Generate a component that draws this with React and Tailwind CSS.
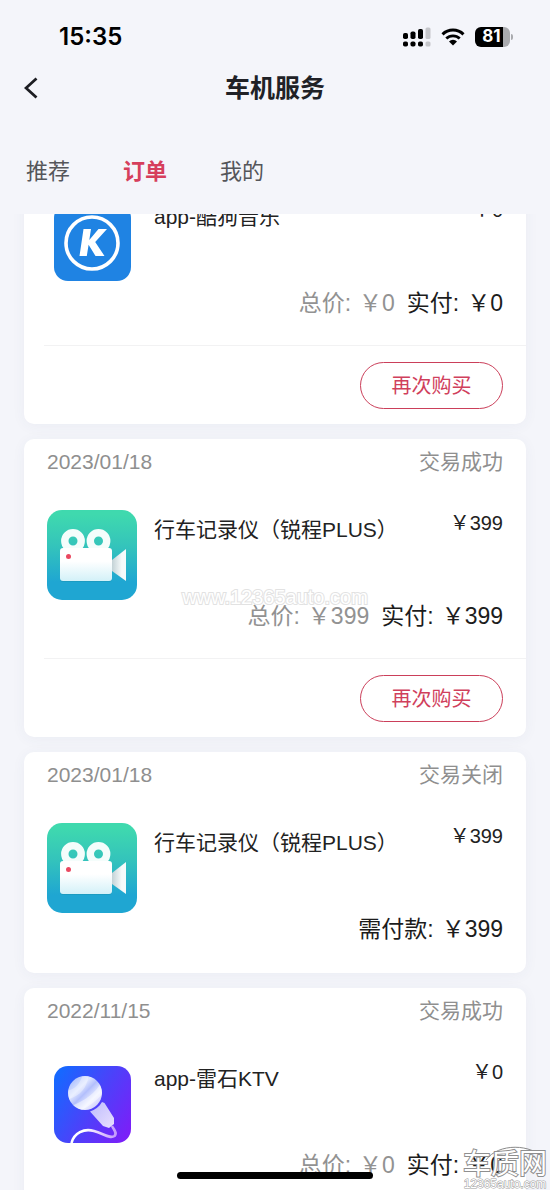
const tabs = ['推荐', '订单', '我的'];

const orders = [
  { id: 1, date: '2023/02/06', status: '交易成功', icon: 'kugou', name: 'app-酷狗音乐', price: 0, paid: true },
  { id: 2, date: '2023/01/18', status: '交易成功', icon: 'camera', name: '行车记录仪（锐程PLUS）', price: 399, paid: true },
  { id: 3, date: '2023/01/18', status: '交易关闭', icon: 'camera', name: '行车记录仪（锐程PLUS）', price: 399, paid: false },
  { id: 4, date: '2022/11/15', status: '交易成功', icon: 'ktv', name: 'app-雷石KTV', price: 0, paid: true },
];

function KugouIcon() {
  return (
    <svg viewBox="0 0 77 77" className="size-[77px]" aria-hidden="true">
      <rect width="77" height="77" rx="14" fill="#1f83e3" />
      <circle cx="38" cy="39" r="26" fill="none" stroke="#fff" strokeWidth="3.6" />
      <path d="M29.5 25H37L35.3 36 44.5 25H53L41.2 38 50.5 52H41.5L34.6 40.8 32.8 52H25.5Z" fill="#fff" />
    </svg>
  );
}

function CameraIcon() {
  return (
    <svg viewBox="0 0 90 90" className="size-[90px]" aria-hidden="true">
      <defs>
        <linearGradient id="camBg" x1="0" y1="0" x2="0" y2="1">
          <stop offset="0.05" stopColor="#3fd9ae" />
          <stop offset="0.4" stopColor="#34c4bb" />
          <stop offset="0.8" stopColor="#1fa6d2" />
        </linearGradient>
        <linearGradient id="camBody" x1="0" y1="0" x2="0" y2="1">
          <stop offset="0.4" stopColor="#fff" />
          <stop offset="1" stopColor="#d3f1f8" />
        </linearGradient>
        <linearGradient id="camLens" x1="0" y1="0" x2="1" y2="0">
          <stop offset="0" stopColor="#c3d2d6" />
          <stop offset="0.7" stopColor="#f6fafa" />
        </linearGradient>
      </defs>
      <rect width="90" height="90" rx="15" fill="url(#camBg)" />
      <g fill="none" stroke="#f4fdfb" strokeWidth="7.4">
        <circle cx="26" cy="31" r="8.2" />
        <circle cx="51.5" cy="31" r="8.2" />
      </g>
      <path d="M65 50 79 39V71L65 61Z" fill="url(#camLens)" />
      <rect x="13" y="39" width="52" height="33" rx="3" fill="#168bab" opacity="0.4" />
      <rect x="13" y="38" width="52" height="33" rx="3" fill="url(#camBody)" />
      <circle cx="21.5" cy="46.5" r="2.5" fill="#ea4860" />
    </svg>
  );
}

function KtvIcon() {
  return (
    <svg viewBox="0 0 77 77" className="size-[77px]" aria-hidden="true">
      <defs>
        <linearGradient id="ktvBg" x1="0" y1="0.2" x2="1" y2="0.8">
          <stop offset="0" stopColor="#1668ff" />
          <stop offset="0.5" stopColor="#4a43fa" />
          <stop offset="1" stopColor="#7a20f8" />
        </linearGradient>
        <linearGradient id="ktvHead" x1="0" y1="0" x2="1" y2="1">
          <stop offset="0.1" stopColor="#a9bdfc" />
          <stop offset="0.35" stopColor="#dfe7ff" />
          <stop offset="0.5" stopColor="#b3bffc" />
          <stop offset="0.7" stopColor="#eef1ff" />
          <stop offset="1" stopColor="#b9b4fb" />
        </linearGradient>
        <linearGradient id="ktvHandle" x1="0" y1="0" x2="1" y2="1">
          <stop offset="0" stopColor="#bdbcfd" />
          <stop offset="1" stopColor="#e9dffe" />
        </linearGradient>
        <linearGradient id="ktvCord" x1="0" y1="0" x2="1" y2="0">
          <stop offset="0.3" stopColor="#fff" />
          <stop offset="1" stopColor="#c49cfc" />
        </linearGradient>
        <clipPath id="ktvHeadClip">
          <circle cx="31" cy="27" r="17" />
        </clipPath>
      </defs>
      <rect width="77" height="77" rx="14" fill="url(#ktvBg)" />
      <circle cx="31" cy="27" r="17" fill="url(#ktvHead)" />
      <g clipPath="url(#ktvHeadClip)">
        <path d="M12 34C27 30 33 22 35 8L29 8C26 18 22 23 12 25Z" fill="#fff" opacity="0.35" />
        <path d="M17 40C31 35 42 26 47 17L50 26C44 34 34 41 24 46Z" fill="#fff" opacity="0.45" />
      </g>
      <path d="M36 45.5C41 44 45 41 48 36L50.5 37 60 52V58L55 62 49 60Z" fill="url(#ktvHandle)" />
      <path
        d="M17.5 77C20 67 30 62 40 65 50 68 56 73 60.5 70 63.5 67 60 64 58 60"
        fill="none"
        stroke="url(#ktvCord)"
        strokeWidth="2.6"
      />
    </svg>
  );
}

const icons = { kugou: KugouIcon, camera: CameraIcon, ktv: KtvIcon };

function StatusBar() {
  return (
    <div className="flex h-[74px] shrink-0 items-center justify-between pr-[37px] pl-[59px]">
      <span className="font-['Inter',sans-serif] text-2xl font-semibold text-black">15:35</span>
      <div className="flex items-center gap-2.5">
        <svg viewBox="0 0 28 20" className="h-5 w-7" aria-label="信号">
          <rect x="0" y="6" width="5" height="6" rx="1.8" />
          <rect x="7.5" y="4.5" width="5" height="7.5" rx="1.8" />
          <rect x="15" y="2" width="5" height="10" rx="1.8" />
          <rect x="22.5" y="0.5" width="5" height="11.5" rx="1.5" fill="#c5c6ca" />
          <rect x="0" y="14.5" width="5" height="5" rx="1.8" />
          <rect x="7.5" y="14.5" width="5" height="5" rx="1.8" />
          <rect x="15" y="14.5" width="5" height="5" rx="1.8" />
          <rect x="22.5" y="14.5" width="5" height="5" rx="1.5" fill="#c5c6ca" />
        </svg>
        <svg viewBox="0 0 24 18" className="h-[18px] w-6" aria-label="无线网络">
          <path d="M1.5 6.3A15.2 15.2 0 0 1 22.5 6.3" fill="none" stroke="#000" strokeWidth="3" />
          <path d="M5.3 10.6A9.6 9.6 0 0 1 18.7 10.6" fill="none" stroke="#000" strokeWidth="2.8" />
          <path d="M12 17.5 8 13.5A5.7 5.7 0 0 1 16 13.5Z" />
        </svg>
        <div className="flex items-center gap-px">
          <div className="flex h-5 w-[35px] items-center justify-center rounded-md bg-[linear-gradient(90deg,#000_81%,#a9aaae_81%)] pr-0.5 font-['Inter',sans-serif] text-[17px] font-bold text-white">
            81
          </div>
          <div className="h-1.5 w-0.5 rounded-r-full bg-[#a9aaae]" />
        </div>
      </div>
    </div>
  );
}

function Amount({ label, value, className }) {
  return (
    <span className={className}>
      {label}:<span className="ml-2">￥{value}</span>
    </span>
  );
}

function OrderCard({ order }) {
  const Icon = icons[order.icon];

  return (
    <li className="rounded-[10px] bg-white shadow-[0_2px_14px_rgba(60,70,120,0.05)]">
      <div className="flex h-[46px] items-center justify-between px-[23px] text-[21px] text-[#8f8f8f]">
        <time>{order.date}</time>
        <span>{order.status}</span>
      </div>
      <div className="flex items-start px-[23px] pt-[25px] text-[#222]">
        <div className="flex size-[90px] shrink-0 items-center justify-center">
          <Icon />
        </div>
        <h2 className="mt-1 ml-[17px] flex-1 text-[21px] leading-8">{order.name}</h2>
        <span className="text-xl leading-[26px]">￥{order.price}</span>
      </div>
      <div className="flex h-8 items-center justify-end gap-3 px-[23px] text-[23px] text-[#1c1c1c]">
        {order.paid ? (
          <>
            <Amount label="总价" value={order.price} className="text-[#929292]" />
            <Amount label="实付" value={order.price} />
          </>
        ) : (
          <Amount label="需付款" value={order.price} />
        )}
      </div>
      {order.paid ? (
        <div className="mt-[26px] ml-5 flex justify-end border-t border-[#f2f2f3] pt-4 pr-[23px] pb-[15px]">
          <button
            type="button"
            className="h-[47px] w-[143px] rounded-full border border-[#cb3f5a] text-xl text-[#d0405c]"
          >
            再次购买
          </button>
        </div>
      ) : (
        <div className="h-7" />
      )}
    </li>
  );
}

function Watermarks() {
  return (
    <div className="pointer-events-none">
      <span className="absolute top-[583px] left-1/2 -translate-x-1/2 text-xl text-white [-webkit-text-stroke:2px_#e2e2e2] [paint-order:stroke]">
        www.12365auto.com
      </span>
      <div className="absolute right-0.5 bottom-0 flex flex-col items-center">
        <svg viewBox="0 0 86 16" className="-mb-2.5 h-4 w-[86px]" aria-hidden="true">
          <path d="M24 14C36 -3 70 -3 83 14" fill="none" stroke="#8a8a8a" strokeWidth="1" />
        </svg>
        <span className="text-[28px] leading-[26px] text-white [-webkit-text-stroke:2px_#8f8f8f] [paint-order:stroke]">
          车质网
        </span>
        <span className="text-xs leading-3 text-white [-webkit-text-stroke:1px_#9b9b9b] [paint-order:stroke]">
          12365auto.com
        </span>
      </div>
    </div>
  );
}

export default function App() {
  return (
    <div className="relative flex h-screen flex-col overflow-hidden bg-[#f4f5fa] font-['Liberation_Sans','Noto_Sans_CJK_SC',sans-serif]">
      <StatusBar />
      <header className="grid h-7 shrink-0 grid-cols-[1fr_auto_1fr] items-center px-6">
        <button type="button" aria-label="返回" className="justify-self-start">
          <svg viewBox="0 0 14 22" className="h-[22px] w-3.5" aria-hidden="true">
            <path d="M12.5 1.5 2 11 12.5 20.5" fill="none" stroke="#1c1d22" strokeWidth="2.8" />
          </svg>
        </button>
        <h1 className="text-[25px] leading-7 font-bold text-[#202126]">车机服务</h1>
      </header>
      <nav className="mt-10 mb-3.5 flex h-[58px] shrink-0 items-center gap-[53px] pl-[26px] text-[22px]">
        {tabs.map((tab) => (
          <button
            key={tab}
            type="button"
            className={tab === '订单' ? 'font-bold text-[#d63f5c]' : 'text-[#55565a]'}
          >
            {tab}
          </button>
        ))}
      </nav>
      <main className="min-h-0 flex-1 overflow-hidden px-6">
        {/* list is scrolled part of the way into the first order */}
        <ul className="-mt-[88px] flex flex-col gap-[15px]">
          {orders.map((order) => (
            <OrderCard key={order.id} order={order} />
          ))}
        </ul>
      </main>
      <div className="absolute bottom-[11px] left-1/2 h-[7px] w-[196px] -translate-x-1/2 rounded-full bg-black" />
      <Watermarks />
    </div>
  );
}
